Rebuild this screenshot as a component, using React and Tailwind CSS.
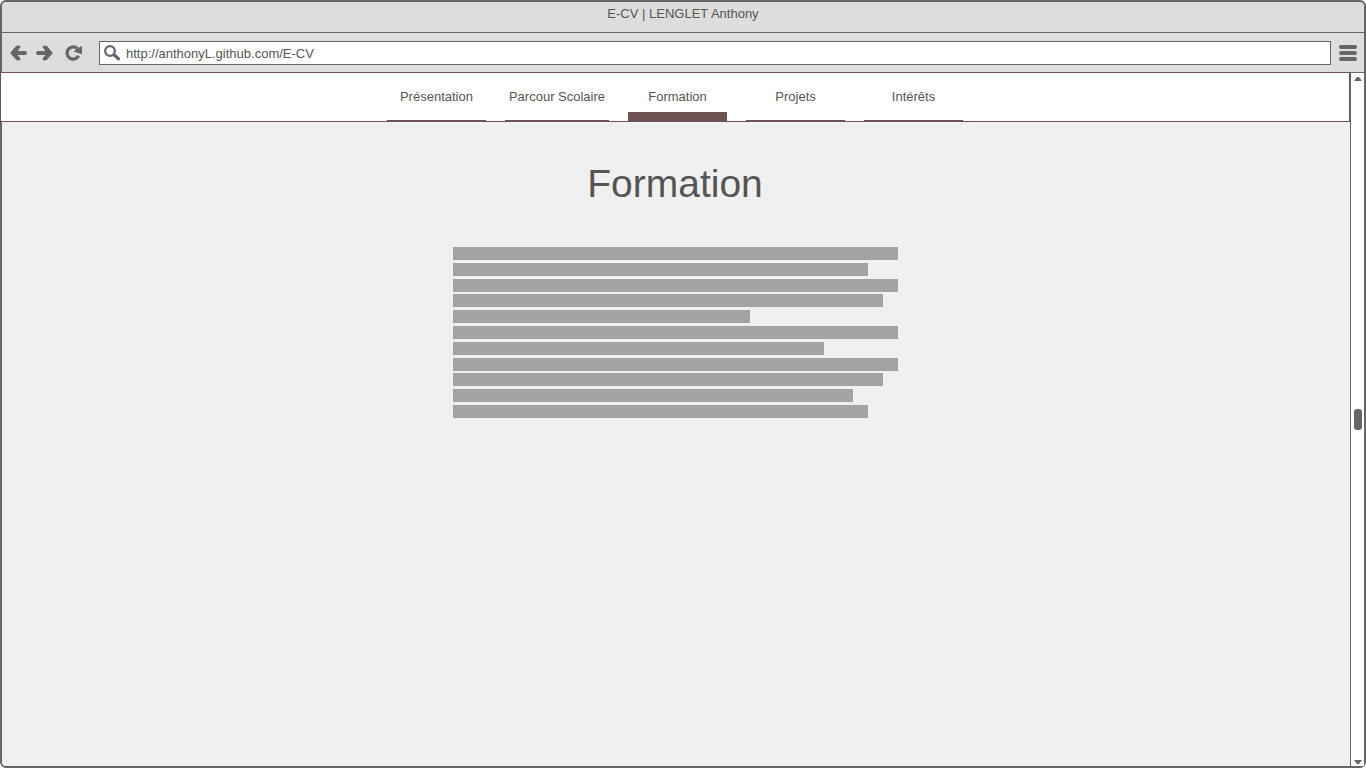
import React from "react";

const sections = ["Présentation", "Parcour Scolaire", "Formation", "Projets", "Intérêts"];

const lines = [
  "w-full",
  "w-[93.3%]",
  "w-full",
  "w-[96.7%]",
  "w-[66.8%]",
  "w-full",
  "w-[83.4%]",
  "w-full",
  "w-[96.7%]",
  "w-[90%]",
  "w-[93.3%]",
];

function ArrowIcon({ className = "" }) {
  return (
    <svg viewBox="0 0 17 16" className={`block h-4 w-[17px] ${className}`} fill="#666666">
      <path d="M0.2 7.9L6 1.1Q7 0.3 8.6 0.4Q11 0.8 10.2 2.6L7.6 5.9H15A1.95 1.95 0 0 1 15 9.9H7.6L10.2 13.2Q11 15 8.6 15.4Q7 15.5 6 14.7Z" />
    </svg>
  );
}

function ReloadIcon() {
  return (
    <svg viewBox="0 0 17 16" className="block h-4 w-[17px]">
      <path d="M12.6 3.9A6.1 6.1 0 1 0 13.6 10.8" fill="none" stroke="#666666" strokeWidth="3.2" />
      <path d="M17 0.7V9.2L8.4 6.6Z" fill="#666666" />
    </svg>
  );
}

function SearchIcon() {
  return (
    <svg viewBox="0 0 16 16" className="block size-4 shrink-0" fill="none" stroke="#666666">
      <circle cx="6" cy="6" r="4.8" strokeWidth="2.3" />
      <path d="M10 9.8L14.4 13.8" strokeWidth="3.2" strokeLinecap="round" />
    </svg>
  );
}

function Triangle({ className = "" }) {
  return (
    <svg viewBox="0 0 8 4" className={`block h-1 w-2 ${className}`}>
      <path d="M0 4L3 0H5L8 4Z" fill="#666666" />
    </svg>
  );
}

function BrowserBar() {
  return (
    <div className="flex h-10 items-center border-b border-[#666666] pl-2 pr-[7px]">
      <button type="button" aria-label="Page précédente" className="mr-[9px]">
        <ArrowIcon />
      </button>
      <button type="button" aria-label="Page suivante" className="mr-3">
        <ArrowIcon className="-scale-x-100" />
      </button>
      <button type="button" aria-label="Actualiser" className="mr-[17px]">
        <ReloadIcon />
      </button>
      <label className="mr-2 flex h-6 flex-1 items-center gap-[6px] border border-[#666666] bg-white pl-1">
        <SearchIcon />
        <input
          type="text"
          aria-label="Adresse"
          defaultValue="http://anthonyL.github.com/E-CV"
          className="h-[22px] min-w-0 flex-1 bg-transparent pt-px text-[13px] leading-5 text-[#555555] outline-none"
        />
      </label>
      <button type="button" aria-label="Menu" className="flex w-[18px] flex-col gap-0.5">
        <span className="h-1 rounded-full bg-[#666666]" />
        <span className="h-1 rounded-full bg-[#666666]" />
        <span className="h-1 rounded-full bg-[#666666]" />
      </button>
    </div>
  );
}

function Scrollbar() {
  return (
    <div className="flex w-3.5 shrink-0 flex-col items-center justify-between border-l border-[#666666] bg-white">
      <button type="button" aria-label="Défiler vers le haut" className="h-3 pt-[3px]">
        <Triangle className="mb-1" />
      </button>
      <div className="h-[21px] w-2 rounded-[3px] bg-[#666666]" />
      <button type="button" aria-label="Défiler vers le bas" className="h-3 pt-1">
        <Triangle className="rotate-180" />
      </button>
    </div>
  );
}

export default function App() {
  return (
    <div className="flex min-h-screen flex-col rounded-md border-2 border-[#666666] bg-[#dddddd] font-['Liberation_Sans',Arial,sans-serif] text-[#555555]">
      <header>
        <div className="h-[31px] border-b border-[#666666] pt-0.5 text-center text-[13px] leading-5">
          E-CV | LENGLET Anthony
        </div>
        <BrowserBar />
      </header>
      <div className="flex flex-1">
        <div className="flex min-w-0 flex-1 flex-col rounded-bl bg-[#f0f0f0]">
          <nav className="-ml-0.5 -mt-px flex h-[50px] justify-center gap-[19px] border border-[#6d5353] bg-white">
            {sections.map((name) => (
              <a
                key={name}
                href="#"
                aria-current={name === "Formation" ? "page" : undefined}
                className={`min-w-[99px] border-[#6d5353] px-1 pt-3.5 text-center text-[13px] leading-5 ${
                  name === "Formation" ? "border-b-[9px]" : "border-b"
                }`}
              >
                {name}
              </a>
            ))}
          </nav>
          <main className="-ml-0.5 flex flex-col items-center pt-9">
            <h1 className="text-[39px] leading-[52px]">Formation</h1>
            <div className="mt-[37px] flex h-[171px] w-[445px] max-w-full flex-col justify-between">
              {lines.map((width, i) => (
                <div key={i} className={`h-[13px] bg-[#a3a3a3] ${width}`} />
              ))}
            </div>
          </main>
        </div>
        <Scrollbar />
      </div>
    </div>
  );
}
